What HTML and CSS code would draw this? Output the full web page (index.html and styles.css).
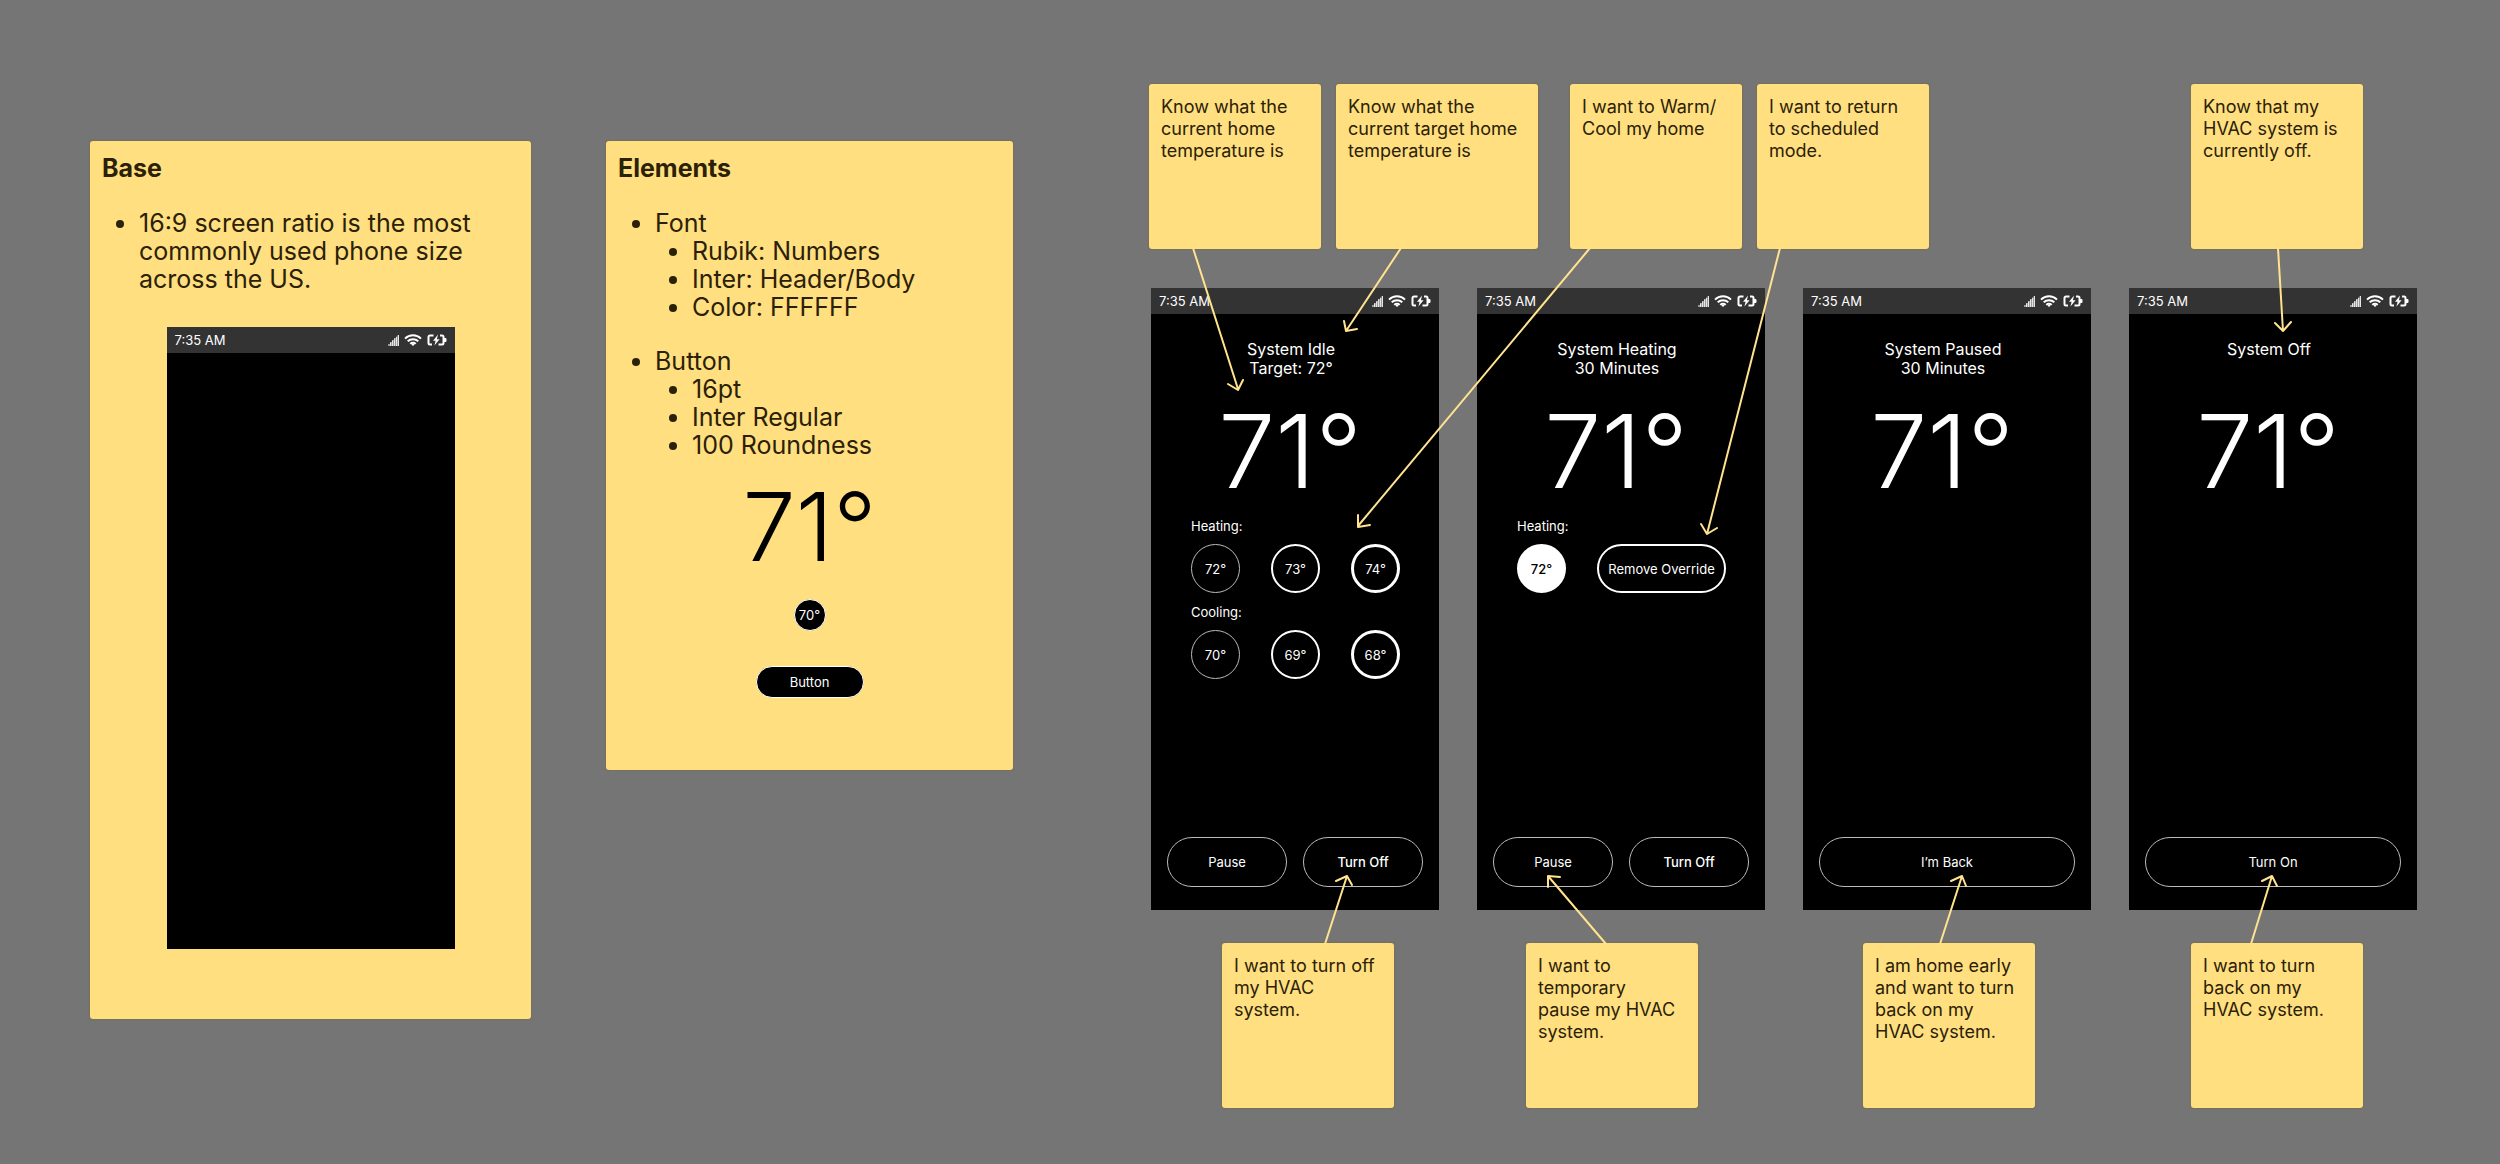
FILE: index.html
```html
<!DOCTYPE html>
<html lang="en">
<head>
    <meta charset="UTF-8">
    <meta name="viewport" content="width=device-width, initial-scale=1.0">
    <title>HVAC Thermostat App - Wireframes</title>
    <link rel="stylesheet" href="styles.css">
</head>
<body>
    <!-- Shared status bar icons -->
    <svg class="sprite" aria-hidden="true">
        <symbol id="icon-signal" viewBox="0 0 11 11">
            <path fill="#9a9a9a" d="M0 11V9h2V7h2V5h2V3h2V1.500h1.500V0H11v11z"/>
            <path stroke="#e6e6e6" stroke-width="1" fill="none" d="M2.500 11V7.500M4.500 11V5.500M6.500 11V3.500M8.500 11V2M10.500 11V0"/>
        </symbol>
        <symbol id="icon-wifi" viewBox="0 0 18 12">
            <g fill="none" stroke="#fff" stroke-width="2">
                <path d="M1 4.600a11.500 11.500 0 0 1 16 0"/>
                <path d="M3.700 7.300a7.600 7.600 0 0 1 10.600 0"/>
                <path d="M6.300 9.900a3.900 3.900 0 0 1 5.400 0"/>
            </g>
            <path fill="#fff" d="M9 12 7.400 10.400a2.300 2.300 0 0 1 3.200 0z"/>
        </symbol>
        <symbol id="icon-battery" viewBox="0 0 20 12">
            <g fill="none" stroke="#fff" stroke-width="2">
                <path d="M6.500 1.500H3a1.500 1.500 0 0 0-1.500 1.500v6A1.500 1.500 0 0 0 3 10.500h2"/>
                <path d="M13 1.500h2a1.500 1.500 0 0 1 1.500 1.500v6a1.500 1.500 0 0 1-1.500 1.500h-3.500"/>
            </g>
            <path fill="#fff" d="M17 4h1.500a1 1 0 0 1 1 1v2a1 1 0 0 1-1 1H17zM11 0.500 6 6.800h2.600L7.400 11.500l5.200-6.300H9.900z"/>
        </symbol>
    </svg>

    <main class="canvas">
        <section class="note spec">
            <h2>Base</h2>
            <ul>
                <li>16:9 screen ratio is the most commonly used phone size across the US.</li>
            </ul>
            <div class="phone">
                <div class="status-bar">
                    <span class="time">7:35 AM</span>
                    <svg class="signal"><use href="#icon-signal"/></svg>
                    <svg class="wifi"><use href="#icon-wifi"/></svg>
                    <svg class="battery"><use href="#icon-battery"/></svg>
                </div>
            </div>
        </section>

        <section class="note spec">
            <h2>Elements</h2>
            <ul>
                <li>Font
                    <ul>
                        <li>Rubik: Numbers</li>
                        <li>Inter: Header/Body</li>
                        <li>Color: FFFFFF</li>
                    </ul>
                </li>
                <li>Button
                    <ul>
                        <li>16pt</li>
                        <li>Inter Regular</li>
                        <li>100 Roundness</li>
                    </ul>
                </li>
            </ul>
            <div class="samples">
                <div class="temp">71°</div>
                <button class="sample-round" type="button">70°</button>
                <button class="sample-pill" type="button">Button</button>
            </div>
        </section>

        <section class="board">
            <div class="notes-top">
                <p class="note">Know what the current home temperature is</p>
                <p class="note">Know what the current target home temperature is</p>
                <p class="note">I want to Warm/<wbr>Cool my home</p>
                <p class="note">I want to return to scheduled mode.</p>
                <p class="note">Know that my HVAC system is currently off.</p>
            </div>

            <div class="screens">
                <!-- Idle -->
                <article class="phone">
                    <div class="status-bar">
                        <span class="time">7:35 AM</span>
                        <svg class="signal"><use href="#icon-signal"/></svg>
                        <svg class="wifi"><use href="#icon-wifi"/></svg>
                        <svg class="battery"><use href="#icon-battery"/></svg>
                    </div>
                    <h3 class="state">System Idle<br>Target: 72°</h3>
                    <div class="temp">71°</div>
                    <div class="controls">
                        <h4>Heating:</h4>
                        <div class="options">
                            <button class="round thin" type="button">72°</button>
                            <button class="round" type="button">73°</button>
                            <button class="round thick" type="button">74°</button>
                        </div>
                        <h4>Cooling:</h4>
                        <div class="options">
                            <button class="round thin" type="button">70°</button>
                            <button class="round" type="button">69°</button>
                            <button class="round thick" type="button">68°</button>
                        </div>
                    </div>
                    <div class="actions">
                        <button class="action" type="button">Pause</button>
                        <button class="action strong" type="button">Turn Off</button>
                    </div>
                </article>

                <!-- Heating -->
                <article class="phone">
                    <div class="status-bar">
                        <span class="time">7:35 AM</span>
                        <svg class="signal"><use href="#icon-signal"/></svg>
                        <svg class="wifi"><use href="#icon-wifi"/></svg>
                        <svg class="battery"><use href="#icon-battery"/></svg>
                    </div>
                    <h3 class="state">System Heating<br>30 Minutes</h3>
                    <div class="temp">71°</div>
                    <div class="controls">
                        <h4>Heating:</h4>
                        <div class="options">
                            <button class="round active" type="button">72°</button>
                            <button class="override" type="button">Remove Override</button>
                        </div>
                    </div>
                    <div class="actions">
                        <button class="action" type="button">Pause</button>
                        <button class="action strong" type="button">Turn Off</button>
                    </div>
                </article>

                <!-- Paused -->
                <article class="phone">
                    <div class="status-bar">
                        <span class="time">7:35 AM</span>
                        <svg class="signal"><use href="#icon-signal"/></svg>
                        <svg class="wifi"><use href="#icon-wifi"/></svg>
                        <svg class="battery"><use href="#icon-battery"/></svg>
                    </div>
                    <h3 class="state">System Paused<br>30 Minutes</h3>
                    <div class="temp">71°</div>
                    <div class="actions">
                        <button class="action" type="button">I’m Back</button>
                    </div>
                </article>

                <!-- Off -->
                <article class="phone">
                    <div class="status-bar">
                        <span class="time">7:35 AM</span>
                        <svg class="signal"><use href="#icon-signal"/></svg>
                        <svg class="wifi"><use href="#icon-wifi"/></svg>
                        <svg class="battery"><use href="#icon-battery"/></svg>
                    </div>
                    <h3 class="state">System Off</h3>
                    <div class="temp">71°</div>
                    <div class="actions">
                        <button class="action" type="button">Turn On</button>
                    </div>
                </article>
            </div>

            <div class="notes-bottom">
                <p class="note">I want to turn off my HVAC system.</p>
                <p class="note">I want to temporary<br>pause my HVAC system.</p>
                <p class="note">I am home early and want to turn back on my HVAC system.</p>
                <p class="note">I want to turn back on my HVAC system.</p>
            </div>

            <!-- Connectors from the notes to the screens -->
            <svg class="arrows" viewBox="0 0 1268 1024" preserveAspectRatio="none" aria-hidden="true">
                <path d="M44 164 89 305M79 300 89 306 94 296"/>
                <path d="M252 164 197 247M195 237 197 247 208 245"/>
                <path d="M441 164 209 442M209 431 209 443 221 441"/>
                <path d="M631 164 558 450M552 440 558 450 568 444"/>
                <path d="M1129 164 1134 247M1126 239 1134 247 1142 238"/>
                <path d="M176 860 198 792M187 797 198 792 203 801"/>
                <path d="M457 860 399 792M399 803 399 792 411 793"/>
                <path d="M791 860 813 792M802 797 813 792 817 802"/>
                <path d="M1102 860 1123 792M1113 797 1123 792 1128 802"/>
            </svg>
        </section>
    </main>
</body>
</html>
```
FILE: styles.css
```css
* {
    box-sizing: border-box;
}
body {
    margin: 0;
    background-color: #757575;
    font-family: Inter, "Liberation Sans", sans-serif;
    color: #2b2108;
}
h2, h3, h4, p, ul {
    margin: 0;
}
button {
    font-family: inherit;
    color: white;
    background: black;
    padding: 0;
    cursor: pointer;
}
.sprite {
    display: none;
}
.canvas {
    display: grid;
    grid-template-columns: 441fr 407fr 1329fr;
    column-gap: 75px;
    align-items: start;
    min-height: 100vh;
    padding: 84px 83px 56px 90px;
}

/* Sticky notes */
.note {
    background-color: #ffdf80;
    border-radius: 3px;
    box-shadow: 0 0 2px #7a6420;
    padding: 12px;
    font-size: 18px;
    line-height: 22px;
}
.spec {
    margin-top: 57px;
    padding: 13px 12px;
    font-size: 25px;
    line-height: 28px;
}
.spec h2 {
    font-size: 25px;
    font-weight: 700;
    margin-bottom: 27px;
}
.spec ul {
    padding-left: 37px;
    list-style: disc;
}
.spec > ul {
    padding-right: 24px;
}
.spec > ul > li + li {
    margin-top: 26px;
}
.spec .phone {
    width: 288px;
    margin: 34px auto 57px;
}
.samples {
    display: flex;
    flex-direction: column;
    align-items: center;
    padding: 8px 0 59px;
}
.samples .temp {
    font-size: 95px;
    line-height: 120px;
    color: black;
}
.samples button {
    height: 32px;
    font-size: 13px;
    border: 1px solid white;
    border-radius: 16px;
}
.sample-round {
    width: 32px;
    margin-top: 12px;
}
.sample-pill {
    width: 108px;
    margin-top: 35px;
}

/* Phone screens */
.phone {
    display: flex;
    flex-direction: column;
    min-height: 622px;
    background: black;
    color: white;
}
.status-bar {
    display: flex;
    align-items: center;
    height: 26px;
    padding: 0 8px;
    background-color: #333;
    font-size: 13px;
    line-height: 16px;
}
.time {
    flex: 1;
}
.signal {
    width: 11px;
    height: 11px;
}
.wifi {
    width: 18px;
    height: 12px;
    margin: 0 5px;
}
.battery {
    width: 20px;
    height: 12px;
}
.state {
    min-height: 38px;
    margin-top: 26px;
    padding-right: 8px;
    font-size: 16px;
    font-weight: 400;
    line-height: 19px;
    text-align: center;
}
.temp {
    font-size: 102px;
    font-weight: 350;
    line-height: 130px;
    text-align: center;
}
.phone .temp {
    padding-right: 10px;
    margin-top: 8px;
}
.controls {
    padding: 2px 38px 0 40px;
}
.controls h4 {
    font-size: 13px;
    font-weight: 400;
    line-height: 16px;
    margin-bottom: 10px;
}
.options {
    display: flex;
    gap: 31px;
    margin-bottom: 11px;
}
.options button {
    height: 49px;
    font-size: 13px;
    font-weight: 400;
    border: 2px solid white;
    border-radius: 25px;
}
.options .round {
    width: 49px;
}
.options .thin {
    border: 1px solid #bbb;
}
.options .thick {
    border-width: 3px;
}
.options .active {
    background: white;
    color: black;
    font-weight: 500;
}
.options .override {
    width: 129px;
}
.actions {
    display: flex;
    gap: 16px;
    margin-top: auto;
    padding: 0 16px 23px;
}
.action {
    flex: 1;
    height: 50px;
    font-size: 13px;
    font-weight: 400;
    border: 1px solid #bbb;
    border-radius: 25px;
}
.strong {
    font-weight: 500;
}

/* User story board */
.board {
    position: relative;
    margin-left: 61px;
}
.notes-top,
.notes-bottom {
    display: grid;
    grid-auto-rows: 165px;
}
.notes-top {
    grid-template-columns: 172fr 15fr 202fr 32fr 172fr 15fr 172fr 262fr 172fr 54fr;
}
.notes-top .note:nth-child(2) {
    grid-column: 3;
}
.notes-top .note:nth-child(3) {
    grid-column: 5;
}
.notes-top .note:nth-child(4) {
    grid-column: 7;
}
.notes-top .note:nth-child(5) {
    grid-column: 9;
}
.screens {
    display: grid;
    grid-template-columns: repeat(4, minmax(0, 1fr));
    gap: 38px;
    margin: 39px 0 33px;
    padding-left: 2px;
}
.notes-bottom {
    grid-template-columns: 73fr 172fr 132fr 172fr 165fr 172fr 156fr 172fr 54fr;
}
.notes-bottom .note:nth-child(1) {
    grid-column: 2;
}
.notes-bottom .note:nth-child(2) {
    grid-column: 4;
}
.notes-bottom .note:nth-child(3) {
    grid-column: 6;
}
.notes-bottom .note:nth-child(4) {
    grid-column: 8;
}
.arrows {
    position: absolute;
    top: 0;
    left: 0;
    width: 100%;
    height: 100%;
    pointer-events: none;
}
.arrows path {
    fill: none;
    stroke: #ffe38f;
    stroke-width: 2;
    stroke-linecap: round;
    stroke-linejoin: round;
    vector-effect: non-scaling-stroke;
}
```
